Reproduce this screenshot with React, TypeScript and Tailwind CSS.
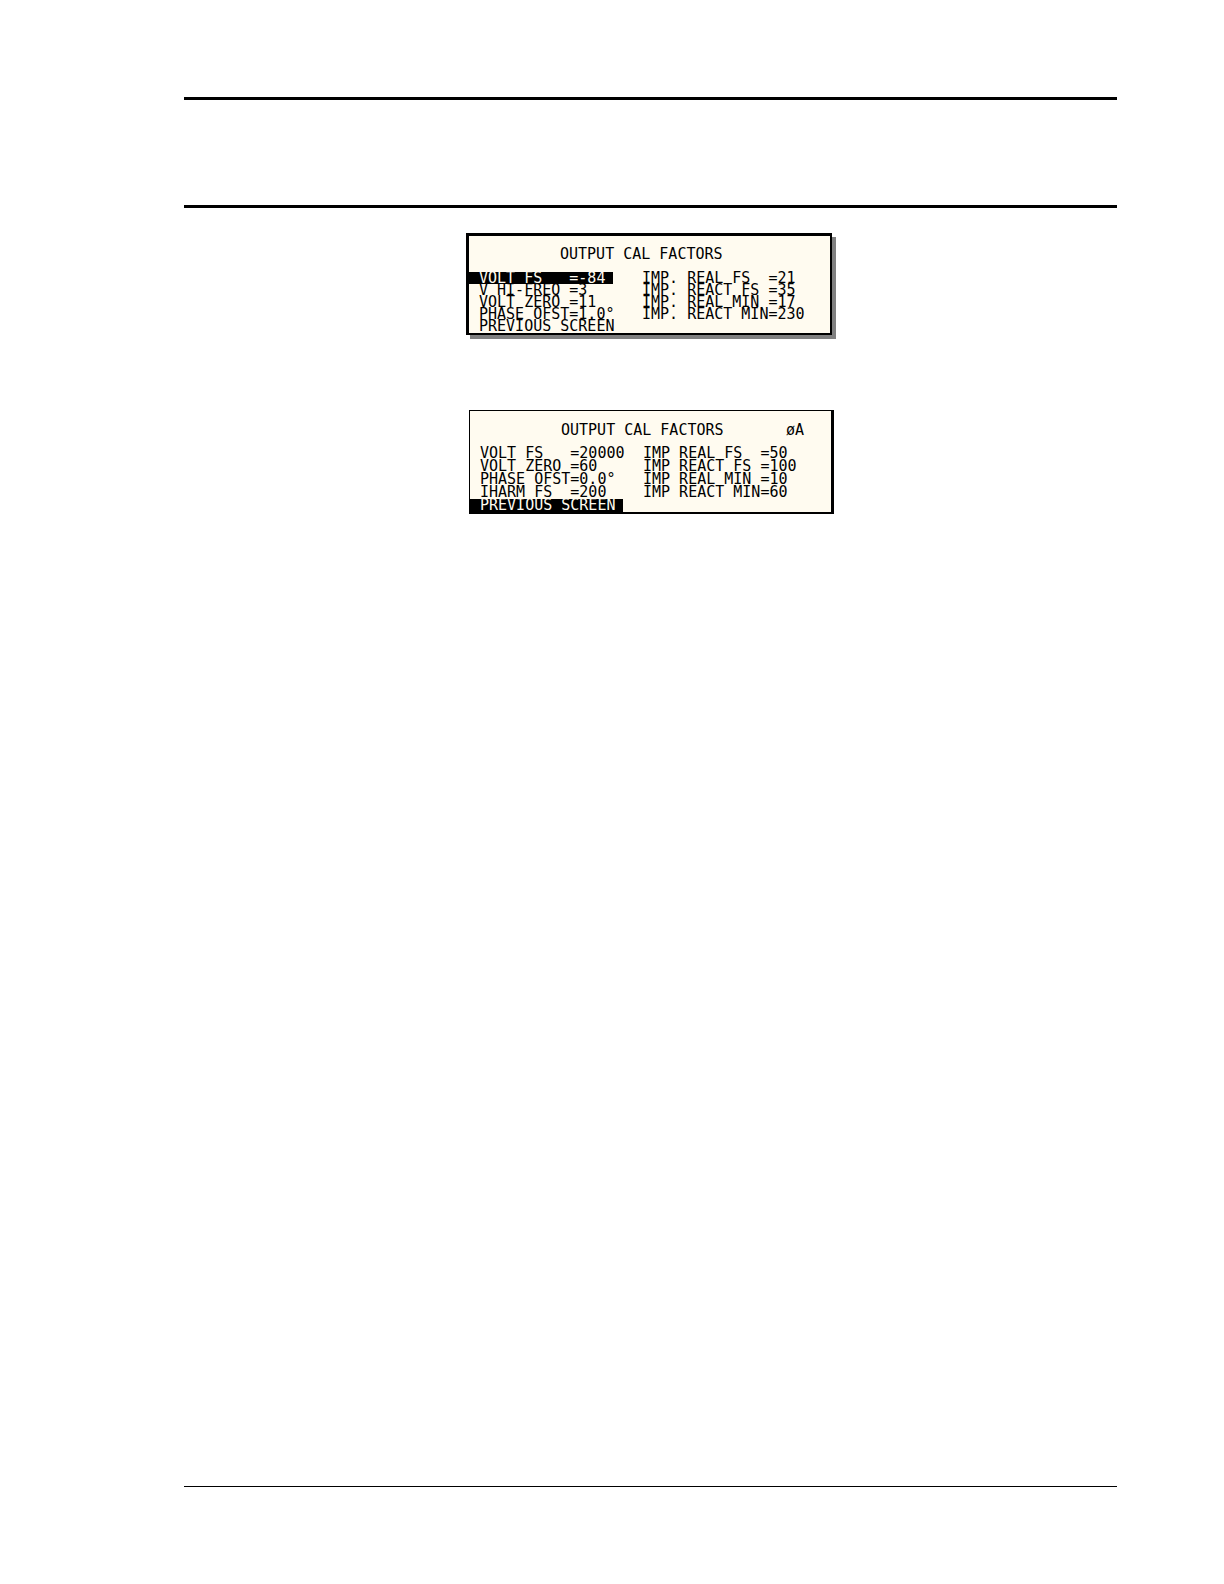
import React from "react";
import clsx from "clsx";

type Row = {
  left: string;
  right?: string;
  selected?: boolean;
};

type ScreenProps = {
  title: string;
  phase?: string;
  rows: Row[];
  className?: string;
  titleClass: string;
  selectedClass: string;
};

const factors: Row[] = [
  { left: "VOLT FS   =-84", right: "IMP. REAL FS  =21", selected: true },
  { left: "V HI-FREQ =3", right: "IMP. REACT FS =35" },
  { left: "VOLT ZERO =11", right: "IMP. REAL MIN =17" },
  { left: "PHASE OFST=1.0°", right: "IMP. REACT MIN=230" },
  { left: "PREVIOUS SCREEN" },
];

const phaseFactors: Row[] = [
  { left: "VOLT FS   =20000", right: "IMP REAL FS  =50" },
  { left: "VOLT ZERO =60", right: "IMP REACT FS =100" },
  { left: "PHASE OFST=0.0°", right: "IMP REAL MIN =10" },
  { left: "IHARM FS  =200", right: "IMP REACT MIN=60" },
  { left: "PREVIOUS SCREEN", selected: true },
];

// LCD screen, 40 characters wide, 9px per character
const Screen = ({
  title,
  phase,
  rows,
  className,
  titleClass,
  selectedClass,
}: ScreenProps) => {
  return (
    <section
      className={clsx(
        "border-black bg-[#fffbf0] text-black text-[15px] whitespace-pre font-['DejaVu_Sans_Mono',monospace]",
        className
      )}
    >
      <div className={clsx("flex justify-between pl-[91px] pr-[27px]", titleClass)}>
        <h2>{title}</h2>
        {phase && <span>{phase}</span>}
      </div>
      {rows.map((row) => (
        <div key={row.left} className="flex">
          <div className="w-[173px] shrink-0">
            <div
              className={clsx(
                "pl-2.5",
                row.selected && "bg-black text-[#fffbf0]",
                row.selected && selectedClass
              )}
            >
              {row.left}
            </div>
          </div>
          <div>{row.right}</div>
        </div>
      ))}
    </section>
  );
};

export default function App() {
  return (
    <div className="min-h-screen bg-white flex flex-col pl-46 pr-[107px] pt-[97px] pb-[97px]">
      <header className="h-[111px] border-y-[3px] border-black"></header>
      <main className="flex-1 pt-[25px]">
        <div className="flex justify-center pr-[3px]">
          <Screen
            title="OUTPUT CAL FACTORS"
            rows={factors}
            className="w-[366px] border-l-[3px] border-t-[3px] border-r-2 border-b-2 leading-[12px] pt-3 pb-px shadow-[4px_4px_0_#808080]"
            titleClass="pb-3"
            selectedClass="w-36"
          />
        </div>
        <div className="flex justify-center pl-0.5 pt-[75px]">
          <Screen
            title="OUTPUT CAL FACTORS"
            phase="øA"
            rows={phaseFactors}
            className="w-[365px] border-l border-t border-r-[3px] border-b-2 leading-[13px] pt-[13px]"
            titleClass="pb-2.5"
            selectedClass="w-[153px]"
          />
        </div>
      </main>
      <footer className="border-t border-black"></footer>
    </div>
  );
}
